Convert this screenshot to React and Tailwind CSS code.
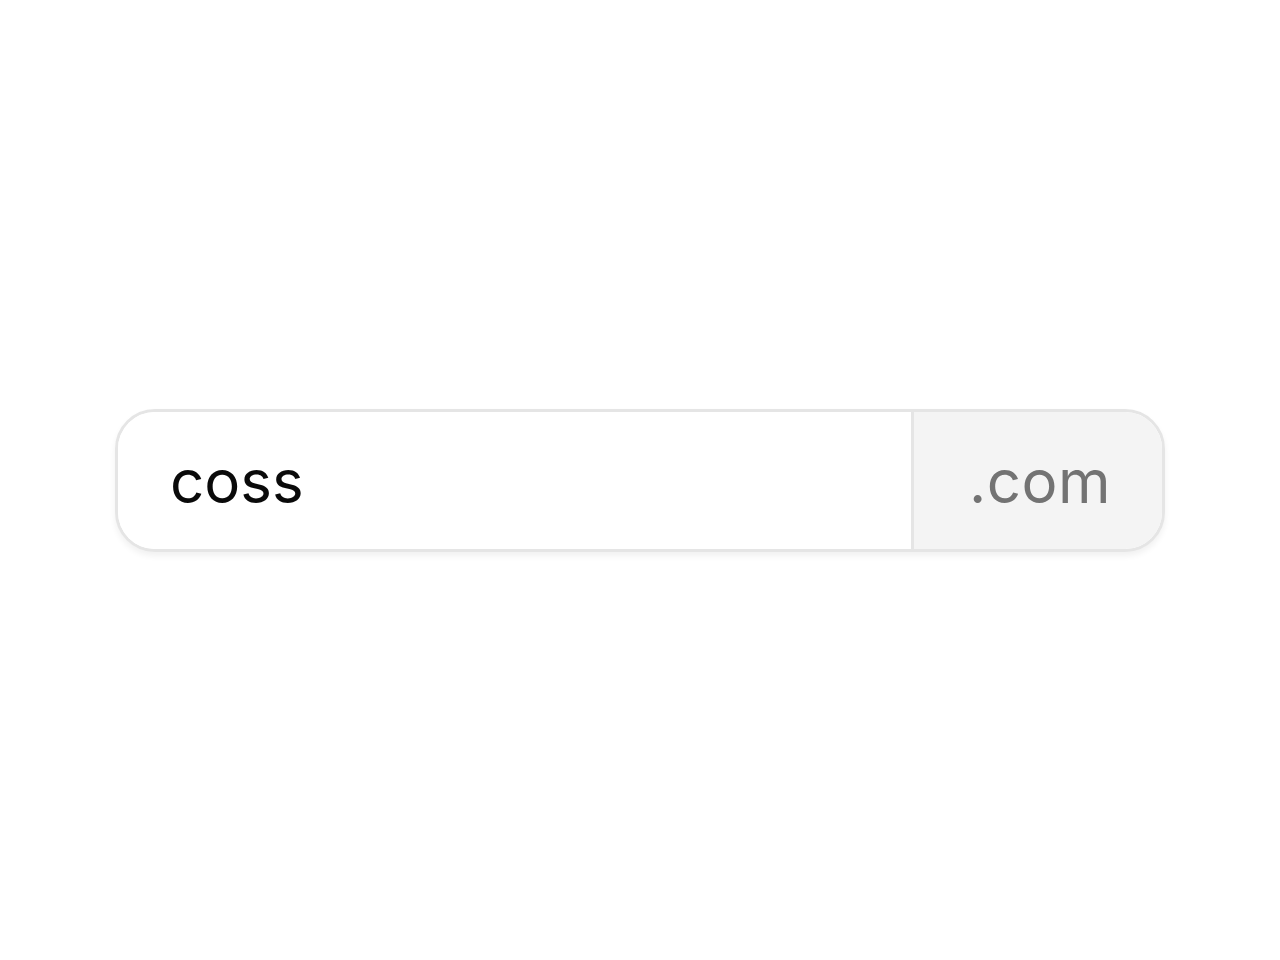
import React, { useState } from 'react';

const App = () => {
  const [valor, setValor] = useState('coss');

  return (
    <div
      className="flex h-[960px] w-full items-center justify-center bg-white"
      style={{ fontFamily: 'Inter, "Liberation Sans", sans-serif' }}
    >
      {/* Campo com sufixo */}
      <div className="flex h-[143px] w-[1050px] overflow-hidden rounded-[40px] border-[3px] border-[#e5e5e5] bg-white shadow-[0_4px_6px_rgba(0,0,0,0.06)]">
        <input
          className="min-w-0 flex-1 bg-white pl-[52px] pr-6 pt-[2px] text-[60px] text-[#0a0a0a] outline-none"
          value={valor}
          onChange={(e) => setValor(e.target.value)}
        />
        <div className="flex items-center border-l-[3px] border-[#e5e5e5] bg-[#f4f4f4] pt-[2px] pl-[55px] pr-[51px] text-[60px] tracking-[0.5px] text-[#737373]">
          .com
        </div>
      </div>
    </div>
  );
};

export default App;
